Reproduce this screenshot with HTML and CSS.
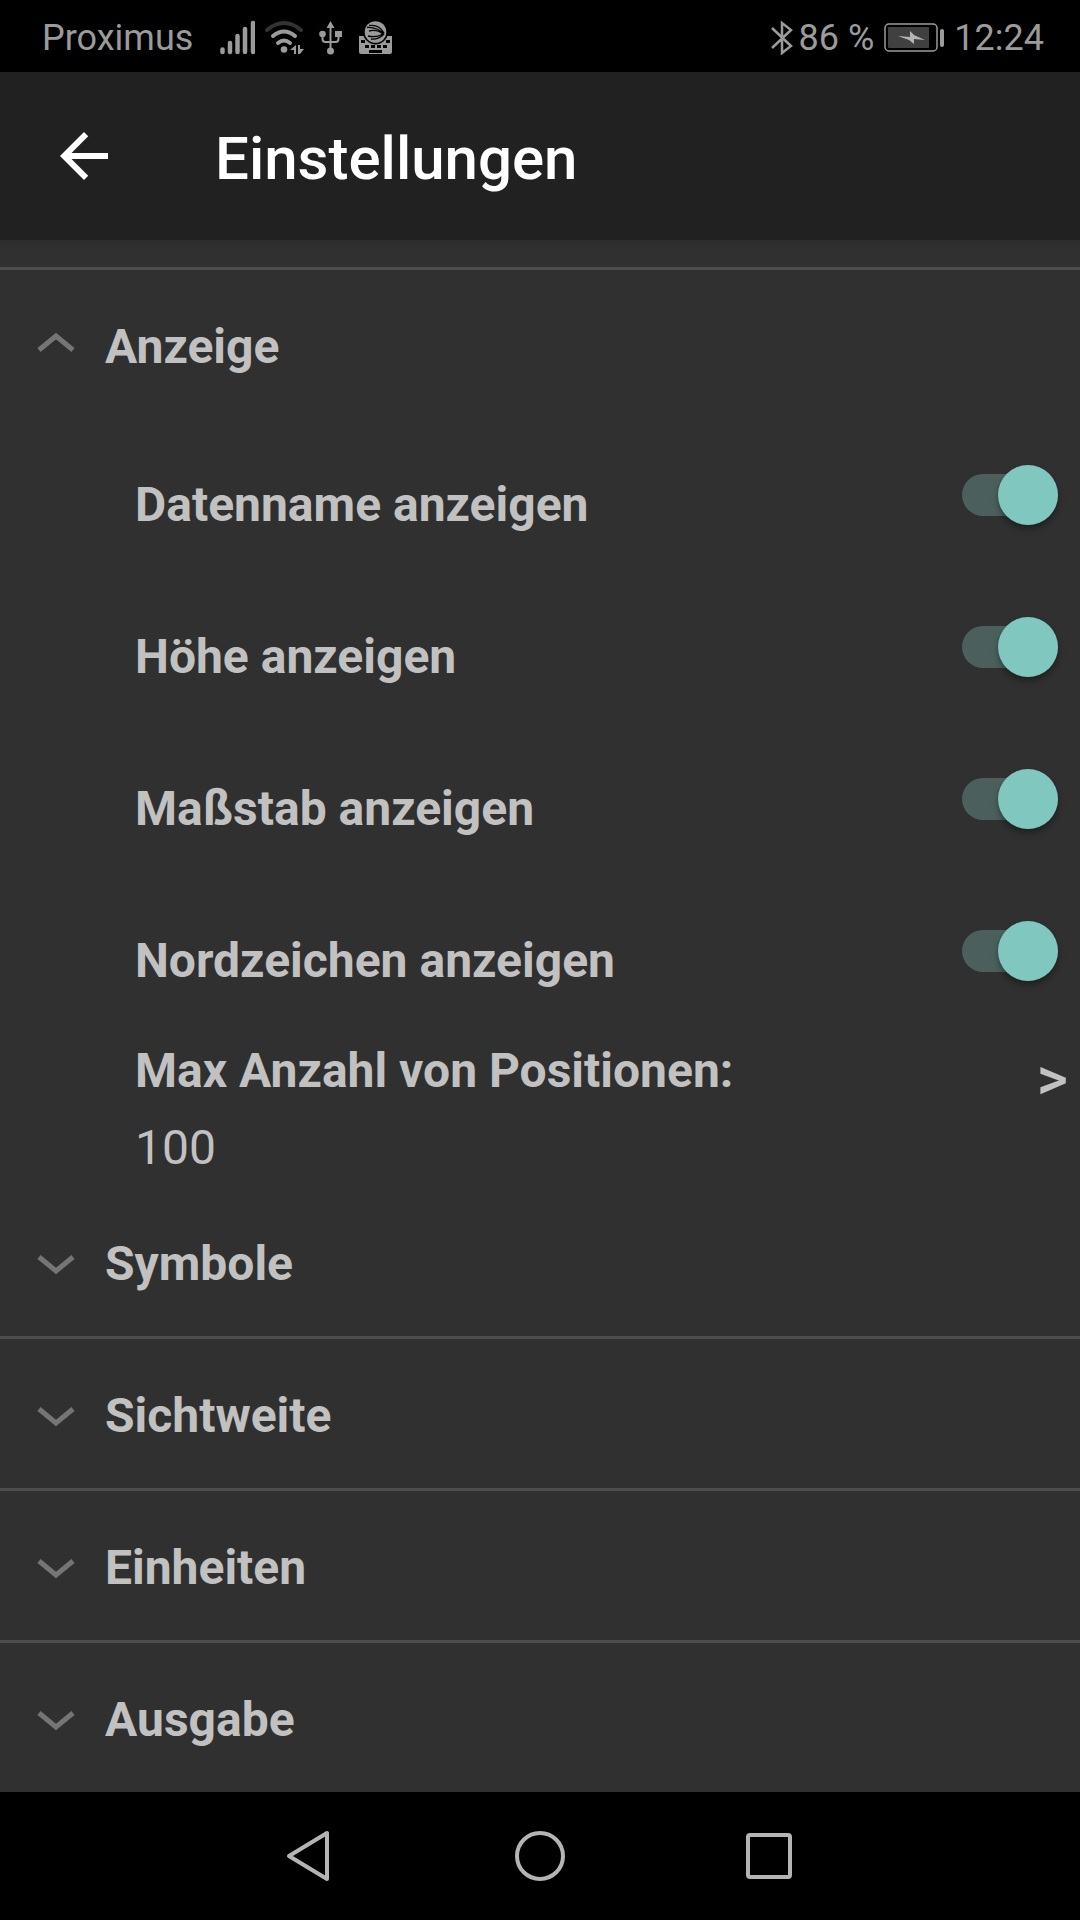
FILE: index.html
```html
<!DOCTYPE html>
<html lang="de">
<head>
<meta charset="utf-8">
<meta name="viewport" content="width=device-width, initial-scale=1">
<title>Einstellungen</title>
<link rel="stylesheet" href="styles.css">
</head>
<body>
<div class="statusbar">
  <div class="status-left">
    <span>Proximus</span>
    <div class="status-icons">
      <svg width="36" height="36" viewBox="0 0 36 36" aria-hidden="true">
        <path d="M3.500 29.500V32M11 23V32M18.500 16V32M26 9V32M34 3V32" stroke="currentColor" stroke-width="4.500" stroke-linecap="round" fill="none"/>
      </svg>
      <svg width="40" height="36" viewBox="0 0 40 36" fill="none" stroke="currentColor" stroke-width="4" stroke-linecap="round" aria-hidden="true">
        <path d="M2 10Q19 -4 36 10" stroke="#333"/>
        <path d="M8 16Q19 7 30 16M13 23Q19 18 25 23"/>
        <circle cx="19" cy="29.500" r="3.300" fill="currentColor" stroke="none"/>
        <path d="M31 25v9h-2v-4h-4zM33 25h2v4h4l-4 5h-2z" fill="currentColor" stroke="none"/>
      </svg>
      <svg width="32" height="36" viewBox="0 0 32 36" aria-hidden="true">
        <path d="M15.500 5V31M7.500 13v6q0 3 3 3h10q3 0 3-3v-6" fill="none" stroke="currentColor" stroke-width="2"/>
        <path d="M15.500 1l4 7h-8zM20 11h7v6h-7z" fill="currentColor"/>
        <circle cx="7.500" cy="14" r="3.300" fill="currentColor"/>
        <circle cx="15.500" cy="31" r="3.500" fill="currentColor"/>
      </svg>
      <svg width="36" height="36" viewBox="0 0 36 36" aria-hidden="true">
        <path d="M2 16h33v16q0 2-2 2H4q-2 0-2-2z" fill="currentColor"/>
        <circle cx="18.500" cy="12" r="12.500" fill="#000"/>
        <circle cx="18.500" cy="12" r="10.800" fill="currentColor"/>
        <path d="M12 5.500Q22 4 27 13M10 7.500Q20 7 27 14M12 11Q20 9 26 14M11 16Q19 18 26 14M14 19Q21 20 27 14" fill="none" stroke="#000" stroke-width="1.300"/>
        <path d="M4 20h4v3H4zM29 20h4v3h-4zM8 25h4v3H8zM14 25h4v3h-4zM20 25h4v3h-4zM26 25h4v3h-4zM12 30h13v3H12z" fill="#000"/>
      </svg>
    </div>
  </div>
  <div class="status-right">
    <svg width="28" height="36" viewBox="0 0 28 36" aria-hidden="true">
      <path d="M1 8l19 18-9 7V3l9 7L1 28" fill="none" stroke="currentColor" stroke-width="2.500"/>
    </svg>
    <span>86 %</span>
    <svg class="battery" width="62" height="30" viewBox="0 0 62 30" aria-hidden="true">
      <rect x="1" y="1" width="52" height="27" rx="4" fill="none" stroke="currentColor" stroke-width="1.500"/>
      <rect x="4" y="4" width="41" height="21" rx="1" fill="#404040"/>
      <path d="M14 13l12 1V8l4 4 11 5-11-1v5l-5-4z" fill="#b4b4b4"/>
      <rect x="56" y="6" width="4" height="18" rx="2" fill="currentColor"/>
    </svg>
    <span>12:24</span>
  </div>
</div>

<header class="appbar">
  <button class="back" type="button" aria-label="Zurück">
    <svg width="72" height="72" viewBox="0 0 24 24" aria-hidden="true"><path d="M20 11H7.830l5.590-5.590L12 4l-8 8 8 8 1.410-1.410L7.830 13H20z" fill="currentColor"/></svg>
  </button>
  <h1 class="title">Einstellungen</h1>
</header>

<main class="settings">
  <section class="group open">
    <h2 class="group-title"><button class="group-toggle" type="button" aria-expanded="true" aria-controls="anzeige"><svg class="chevron" width="38" height="26" viewBox="0 0 38 26" aria-hidden="true"><path d="M2 8L19 22L36 8"/></svg>Anzeige</button></h2>
    <div id="anzeige">
      <div class="option"><label for="datenname">Datenname anzeigen</label><input class="switch" id="datenname" type="checkbox" role="switch" checked></div>
      <div class="option"><label for="hoehe">Höhe anzeigen</label><input class="switch" id="hoehe" type="checkbox" role="switch" checked></div>
      <div class="option"><label for="massstab">Maßstab anzeigen</label><input class="switch" id="massstab" type="checkbox" role="switch" checked></div>
      <div class="option"><label for="nordzeichen">Nordzeichen anzeigen</label><input class="switch" id="nordzeichen" type="checkbox" role="switch" checked></div>
      <button class="link-option" type="button">
        <span class="link-text"><span>Max Anzahl von Positionen:</span><span class="value">100</span></span>
        <span class="arrow">&gt;</span>
      </button>
    </div>
  </section>
  <section class="group">
    <h2 class="group-title"><button class="group-toggle" type="button" aria-expanded="false"><svg class="chevron" width="38" height="26" viewBox="0 0 38 26" aria-hidden="true"><path d="M2 8L19 22L36 8"/></svg>Symbole</button></h2>
  </section>
  <section class="group">
    <h2 class="group-title"><button class="group-toggle" type="button" aria-expanded="false"><svg class="chevron" width="38" height="26" viewBox="0 0 38 26" aria-hidden="true"><path d="M2 8L19 22L36 8"/></svg>Sichtweite</button></h2>
  </section>
  <section class="group">
    <h2 class="group-title"><button class="group-toggle" type="button" aria-expanded="false"><svg class="chevron" width="38" height="26" viewBox="0 0 38 26" aria-hidden="true"><path d="M2 8L19 22L36 8"/></svg>Einheiten</button></h2>
  </section>
  <section class="group">
    <h2 class="group-title"><button class="group-toggle" type="button" aria-expanded="false"><svg class="chevron" width="38" height="26" viewBox="0 0 38 26" aria-hidden="true"><path d="M2 8L19 22L36 8"/></svg>Ausgabe</button></h2>
  </section>
</main>

<nav class="navbar" aria-label="System">
  <button type="button" aria-label="Zurück"><svg width="54" height="54" viewBox="0 0 54 54" aria-hidden="true"><path d="M43 4V50L5 27Z"/></svg></button>
  <button type="button" aria-label="Startseite"><svg width="54" height="54" viewBox="0 0 54 54" aria-hidden="true"><circle cx="27" cy="27" r="23"/></svg></button>
  <button type="button" aria-label="Übersicht"><svg width="54" height="54" viewBox="0 0 54 54" aria-hidden="true"><rect x="6" y="6" width="42" height="42" rx="2"/></svg></button>
</nav>
</body>
</html>
```

FILE: styles.css
```css
* {
  box-sizing: border-box;
}

body {
  margin: 0;
  min-height: 100vh;
  display: flex;
  flex-direction: column;
  background: #303030;
  color: #c1c1c1;
  font-family: Roboto, "Noto Sans", sans-serif;
  font-size: 48px;
}

button {
  border: 0;
  padding: 0;
  background: none;
  color: inherit;
  font: inherit;
  text-align: left;
}

svg {
  display: block;
  flex: none;
}

.statusbar {
  display: flex;
  justify-content: space-between;
  align-items: center;
  height: 72px;
  padding: 3px 36px 0 42px;
  background: #000;
  color: #9b9b9b;
  font-size: 36px;
}

.status-left,
.status-right,
.status-icons {
  display: flex;
  align-items: center;
}

.status-left {
  gap: 26px;
}

.status-icons {
  gap: 10px;
}

.battery {
  margin: 0 8px 0 10px;
}

.appbar {
  display: flex;
  align-items: center;
  gap: 95px;
  height: 168px;
  padding: 0 48px;
  background: #212121;
  color: #fff;
  box-shadow: 0 1px 8px rgba(0, 0, 0, 0.12);
}

.title {
  margin: 0;
  padding-top: 4px;
  font-size: 60px;
  font-weight: 500;
}

.settings {
  flex: 1;
  padding-top: 27px;
}

.group {
  border-top: 3px solid #4c4c4c;
}

.open + .group {
  border-top: 0;
}

.group-title {
  margin: 0;
  font-size: 48px;
  font-weight: 700;
}

.group-toggle {
  display: flex;
  align-items: center;
  gap: 30px;
  width: 100%;
  height: 149px;
  padding: 4px 37px 0;
}

.chevron {
  margin-bottom: 4px;
  fill: none;
  stroke: #757575;
  stroke-width: 5px;
}

.open .chevron {
  transform: rotate(180deg);
}

.option {
  display: flex;
  align-items: center;
  justify-content: space-between;
  height: 152px;
  padding: 0 22px 0 135px;
  font-weight: 700;
}

.option label {
  padding-top: 18px;
}

.switch {
  appearance: none;
  display: flex;
  align-items: center;
  justify-content: flex-end;
  flex: none;
  width: 96px;
  height: 42px;
  margin: 0;
  border-radius: 21px;
  background: #4b605d;
}

.switch::before {
  content: "";
  flex: none;
  width: 60px;
  height: 60px;
  border-radius: 50%;
  background: #80c7c0;
  box-shadow: 0 4px 6px rgba(0, 0, 0, 0.35);
}

.switch:not(:checked) {
  justify-content: flex-start;
}

.link-option {
  display: flex;
  justify-content: space-between;
  width: 100%;
  height: 160px;
  padding: 5px 12px 0 135px;
  line-height: 77px;
}

.link-text {
  display: flex;
  flex-direction: column;
  font-weight: 700;
}

.value {
  font-weight: 400;
}

.arrow {
  padding-top: 8px;
  font-size: 60px;
  font-weight: 500;
}

.navbar {
  display: flex;
  align-items: center;
  justify-content: center;
  gap: 175px;
  height: 128px;
  background: #000;
}

.navbar svg {
  fill: none;
  stroke: #b4b4b4;
  stroke-width: 4px;
  stroke-linejoin: round;
}
```
